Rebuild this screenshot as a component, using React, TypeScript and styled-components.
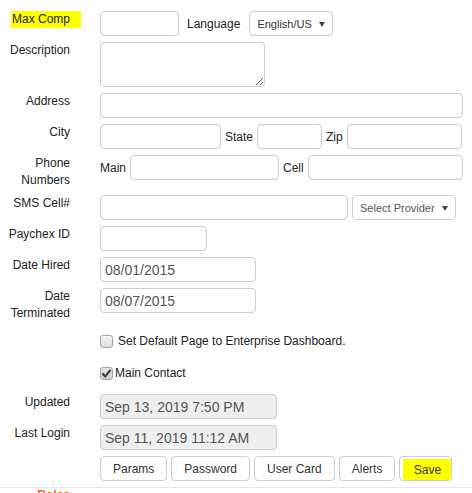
import React from "react";
import styled, { createGlobalStyle } from "styled-components";

const GlobalStyle = createGlobalStyle`
  html, body { margin: 0; padding: 0; background: #fff; }
  body {
    font-family: "Liberation Sans", Arial, sans-serif;
    font-size: 12px;
    color: #222;
    overflow: hidden;
  }
`;

const Page = styled.div`
  margin-top: -12px;
  display: flex;
  flex-direction: column;
`;

const Form = styled.div`
  display: grid;
  grid-template-columns: 70px minmax(0, 1fr);
  column-gap: 30px;
  row-gap: 6px;
  align-items: start;
  padding-right: 9px;
`;

const Label = styled.div`
  text-align: right;
  font-size: 12px;
  line-height: 17px;
  color: #222;
`;

const Marker = styled.span`
  background: #ffff00;
  padding: 0 11px 0 1px;
  margin-right: -11px;
  display: inline-block;
`;

const Field = styled.div`
  display: flex;
  align-items: center;
  gap: 4px;
  min-height: 25px;
  min-width: 0;
`;

const Blank = styled.div`
  height: 17px;
`;

const InlineText = styled.span<{ $ml?: number; $mr?: number }>`
  font-size: 12px;
  color: #222;
  white-space: nowrap;
  margin-left: ${(p) => p.$ml ?? 0}px;
  margin-right: ${(p) => p.$mr ?? 0}px;
`;

const Input = styled.input<{ $w?: number }>`
  box-sizing: border-box;
  height: 25px;
  ${(p) => (p.$w ? `width: ${p.$w}px; flex: none;` : `flex: 1 1 0; width: 0; min-width: 0;`)}
  border: 1px solid #ccc;
  border-radius: 4px;
  padding: 0 4px;
  font-family: "Liberation Sans", Arial, sans-serif;
  font-size: 14px;
  color: #555;
  background: #fff;
  outline: none;
  &:disabled {
    background: #eee;
    color: #555;
    opacity: 1;
  }
`;

const TextArea = styled.textarea`
  box-sizing: border-box;
  width: 165px;
  height: 45px;
  border: 1px solid #ccc;
  border-radius: 4px;
  padding: 4px;
  font-family: "Liberation Sans", Arial, sans-serif;
  font-size: 14px;
  color: #555;
  resize: both;
  outline: none;
`;

const SelectBox = styled.div<{ $w: number; $muted?: boolean }>`
  box-sizing: border-box;
  width: ${(p) => p.$w}px;
  height: 25px;
  flex: none;
  display: flex;
  align-items: center;
  justify-content: space-between;
  padding: 0 7px 0 7px;
  border: 1px solid #ccc;
  border-radius: 4px;
  font-size: 11px;
  color: ${(p) => (p.$muted ? "#555" : "#333")};
  background: #fff;
`;

const Arrow = styled.span`
  width: 0;
  height: 0;
  border-left: 3px solid transparent;
  border-right: 3px solid transparent;
  border-top: 5px solid #444;
  margin-top: 1px;
`;

const CheckRow = styled.div<{ $h: number; $gap: number; $pb?: number }>`
  display: flex;
  align-items: center;
  gap: ${(p) => p.$gap}px;
  height: ${(p) => p.$h}px;
  box-sizing: border-box;
  padding-bottom: ${(p) => p.$pb ?? 0}px;
  font-size: 12px;
  color: #222;
`;

const Box = styled.span<{ $on?: boolean }>`
  box-sizing: border-box;
  width: 13px;
  height: 13px;
  flex: none;
  border: 1px solid #a3a3a3;
  border-radius: 3px;
  background: ${(p) => (p.$on ? "linear-gradient(#e4e4e4, #cfcfcf)" : "linear-gradient(#f4f4f4, #dcdcdc)")};
  display: flex;
  align-items: center;
  justify-content: center;
`;

const Buttons = styled.div`
  display: flex;
  gap: 4px;
`;

const Button = styled.button`
  box-sizing: border-box;
  height: 25px;
  padding: 0 12px;
  border: 1px solid #ccc;
  border-radius: 4px;
  background: #fff;
  font-family: "Liberation Sans", Arial, sans-serif;
  font-size: 12px;
  color: #333;
  cursor: pointer;
`;

const HighlightButton = styled(Button)`
  padding: 0;
  display: flex;
  align-items: flex-start;
`;

const ButtonMarker = styled.span`
  display: flex;
  align-items: center;
  justify-content: center;
  width: 48px;
  height: 21px;
  margin: 2px 0 0 3px;
  background: #ffff00;
`;

const Divider = styled.div`
  height: 1px;
  background: #e6e6e6;
  margin-top: 6px;
`;

const Section = styled.div`
  display: grid;
  grid-template-columns: 70px 1fr;
  column-gap: 30px;
`;

const SectionTitle = styled.div`
  text-align: right;
  font-size: 12px;
  font-weight: bold;
  line-height: 15px;
  color: #ff6a13;
`;

const Check: React.FC<{ checked?: boolean }> = ({ checked }) => (
  <Box $on={checked}>
    {checked && (
      <svg width="11" height="11" viewBox="0 0 11 11">
        <path d="M1.5 5.5 L4.2 8.5 L9.5 1.8" fill="none" stroke="#333" strokeWidth="2" />
      </svg>
    )}
  </Box>
);

export default function App() {
  return (
    <>
      <GlobalStyle />
      <Page>
        <Form>
          <Label>Number</Label>
          <Blank />

          <Label>
            <Marker>Max Comp</Marker>
          </Label>
          <Field>
            <Input $w={79} />
            <InlineText $ml={4} $mr={5}>Language</InlineText>
            <SelectBox $w={84}>
              English/US
              <Arrow />
            </SelectBox>
          </Field>

          <Label>Description</Label>
          <Field>
            <TextArea />
          </Field>

          <Label>Address</Label>
          <Field>
            <Input />
          </Field>

          <Label>City</Label>
          <Field>
            <Input $w={121} />
            <InlineText>State</InlineText>
            <Input $w={65} />
            <InlineText>Zip</InlineText>
            <Input $w={115} />
          </Field>

          <Label>
            Phone
            <br />
            Numbers
          </Label>
          <Field>
            <InlineText>Main</InlineText>
            <Input $w={149} />
            <InlineText>Cell</InlineText>
            <Input />
          </Field>

          <Label>SMS Cell#</Label>
          <Field>
            <Input $w={248} />
            <SelectBox $w={104} $muted>
              Select Provider
              <Arrow />
            </SelectBox>
          </Field>

          <Label>Paychex ID</Label>
          <Field>
            <Input $w={107} />
          </Field>

          <Label>Date Hired</Label>
          <Field>
            <Input $w={156} defaultValue="08/01/2015" />
          </Field>

          <Label>
            Date
            <br />
            Terminated
          </Label>
          <Field>
            <Input $w={156} defaultValue="08/07/2015" />
          </Field>

          <Label />
          <CheckRow $h={26} $gap={5}>
            <Check />
            Set Default Page to Enterprise Dashboard.
          </CheckRow>

          <Label />
          <CheckRow $h={28} $gap={2} $pb={2}>
            <Check checked />
            Main Contact
          </CheckRow>

          <Label>Updated</Label>
          <Field>
            <Input $w={177} disabled defaultValue="Sep 13, 2019 7:50 PM" />
          </Field>

          <Label>Last Login</Label>
          <Field>
            <Input $w={177} disabled defaultValue="Sep 11, 2019 11:12 AM" />
          </Field>

          <Label />
          <Buttons>
            <Button>Params</Button>
            <Button>Password</Button>
            <Button>User Card</Button>
            <Button>Alerts</Button>
            <HighlightButton>
              <ButtonMarker>Save</ButtonMarker>
            </HighlightButton>
          </Buttons>
        </Form>
        <Divider />
        <Section>
          <SectionTitle>Roles</SectionTitle>
        </Section>
      </Page>
    </>
  );
}
